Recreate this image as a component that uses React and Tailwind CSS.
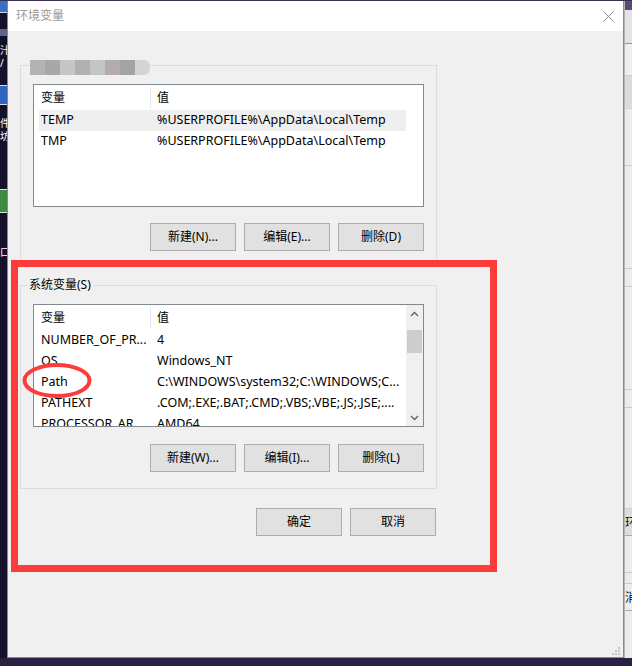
import React from "react";

const FONT = "font-['Noto_Sans','Noto_Sans_CJK_SC',sans-serif]";

function Btn({ children }) {
  return (
    <div className="w-[86px] h-[28px] bg-[#e1e1e1] border border-[#adadad] flex items-center justify-center text-[12px] text-black leading-none">
      {children}
    </div>
  );
}

function Chevron({ up }) {
  return (
    <svg width="9" height="6" viewBox="0 0 9 6">
      <polyline
        points={up ? "1,5 4.5,1.5 8,5" : "1,1 4.5,4.5 8,1"}
        fill="none"
        stroke="#606060"
        strokeWidth="1.3"
      />
    </svg>
  );
}

function Scrollbar() {
  return (
    <div className="w-[17px] h-full bg-[#f0f0f0] flex flex-col items-center">
      <div className="h-[17px] w-full flex items-center justify-center">
        <Chevron up />
      </div>
      <div className="flex-1 w-full px-px pt-[8px]">
        <div className="h-[23px] w-full bg-[#cdcdcd]" />
      </div>
      <div className="h-[17px] w-full flex items-center justify-center">
        <Chevron />
      </div>
    </div>
  );
}

function VarList({ rows, highlight, scroll }) {
  return (
    <div className="h-[123px] border border-[#828790] bg-white flex overflow-hidden">
      <div className="flex-1 min-w-0 overflow-hidden">
        <div className="h-[25px] flex items-stretch text-[12px]">
          <div className="w-[117px] pl-[7px] flex items-center border-r border-[#e5e5e5] my-[2px]">变量</div>
          <div className="pl-[6px] flex items-center">值</div>
        </div>
        {rows.map((r, i) => (
          <div key={i} className="h-[21px] flex items-center whitespace-nowrap text-[12.5px] text-black">
            <div className={"flex items-center h-full " + (highlight === i ? "bg-[#efefef] ml-[5px] w-[367px]" : "")}>
              <div className={highlight === i ? "w-[112px] pl-[2px]" : "w-[117px] pl-[7px]"}>{r[0]}</div>
              <div className="pl-[6px]">{r[1]}</div>
            </div>
          </div>
        ))}
      </div>
      {scroll && <Scrollbar />}
    </div>
  );
}

function Mosaic() {
  const colors = ["#b3b3b3", "#a8a8a8", "#c5c6c6", "#b2afad", "#c4c5c5", "#b3acaa", "#a3a3a4", "#d2d4d5"];
  return (
    <div className="flex h-[15px] -mb-[5px]">
      {colors.map((c, i) => (
        <div
          key={i}
          className={"w-[15px] h-[15px] " + (i === 7 ? "rounded-r-[6px]" : "")}
          style={{ backgroundColor: c }}
        />
      ))}
    </div>
  );
}

export default function App() {
  return (
    <div className={"relative w-[632px] h-[666px] overflow-hidden bg-[#1b1630] flex flex-col " + FONT}>
      <div className="h-px bg-[#3a2f52]" />
      <div className="flex h-[657px]">
        {/* left desktop strip */}
        <div className="w-[7px] h-full bg-[#16112b] flex flex-col overflow-hidden">
          <div className="h-[12px] bg-[#3b6fc4] border-b border-[#c9d6ea]" />
          <div className="h-[16px]" />
          <div className="h-[7px] bg-[#8aa0c8] opacity-60" />
          <div className="h-[8px]" />
          <div className="h-[13px] text-[10px] text-white leading-[13px] overflow-hidden">汁</div>
          <div className="h-[13px] text-[10px] text-white leading-[13px] overflow-hidden">/</div>
          <div className="h-[15px]" />
          <div className="h-[20px] bg-[#2f64c0] border-y border-[#d3deef]" />
          <div className="h-[12px]" />
          <div className="h-[13px] text-[10px] text-white leading-[13px] overflow-hidden">件</div>
          <div className="h-[13px] text-[10px] text-white leading-[13px] overflow-hidden">坊</div>
          <div className="h-[46px]" />
          <div className="h-[24px] bg-[#3f8a43] border-y border-[#d7e6d6]" />
          <div className="h-[32px]" />
          <div className="h-[14px] text-[10px] text-white leading-[14px] overflow-hidden">口</div>
        </div>

        {/* window */}
        <div className="w-[617px] h-full border-x border-b border-[#8a8a96] flex flex-col">
          <div className="h-[30px] bg-white flex items-center justify-between pl-[8px] pr-[9px]">
            <span className="text-[12px] text-[#9a9a9a]">环境变量</span>
            <svg width="11" height="11" viewBox="0 0 11 11">
              <path d="M0.5 0.5 L10.5 10.5 M10.5 0.5 L0.5 10.5" stroke="#8a8a8a" strokeWidth="1" />
            </svg>
          </div>
          <div className="flex-1 bg-[#f0f0f0] flex flex-col text-black">
            <fieldset className="mt-[29px] ml-[12px] w-[417px] border border-[#dcdcdc] px-[12px] pb-[15px]">
              <legend className="ml-[-3px] px-0">
                <Mosaic />
              </legend>
              <div className="mt-[14px]">
                <VarList
                  highlight={0}
                  rows={[
                    ["TEMP", "%USERPROFILE%\\AppData\\Local\\Temp"],
                    ["TMP", "%USERPROFILE%\\AppData\\Local\\Temp"],
                  ]}
                />
              </div>
              <div className="mt-[16px] flex justify-end gap-[8px]">
                <Btn>新建(N)...</Btn>
                <Btn>编辑(E)...</Btn>
                <Btn>删除(D)</Btn>
              </div>
            </fieldset>

            <fieldset className="mt-[10px] ml-[12px] w-[417px] border border-[#dcdcdc] px-[12px] pb-[16px]">
              <legend className="ml-[-6px] px-[2px] text-[12px] leading-[16px]">系统变量(S)</legend>
              <div className="mt-[11px]">
                <VarList
                  scroll
                  rows={[
                    ["NUMBER_OF_PR...", "4"],
                    ["OS", "Windows_NT"],
                    ["Path", "C:\\WINDOWS\\system32;C:\\WINDOWS;C..."],
                    ["PATHEXT", ".COM;.EXE;.BAT;.CMD;.VBS;.VBE;.JS;.JSE;...."],
                    ["PROCESSOR_AR...", "AMD64"],
                  ]}
                />
              </div>
              <div className="mt-[17px] flex justify-end gap-[8px]">
                <Btn>新建(W)...</Btn>
                <Btn>编辑(I)...</Btn>
                <Btn>删除(L)</Btn>
              </div>
            </fieldset>

            <div className="mt-[19px] ml-[12px] w-[417px] pr-px flex justify-end gap-[8px]">
              <Btn>确定</Btn>
              <Btn>取消</Btn>
            </div>

            <div className="flex-1 flex items-end justify-end pr-[2px] pb-[1px]">
              <svg width="9" height="9" viewBox="0 0 9 9">
                <rect x="6" y="0" width="2" height="2" fill="#c4c4c4" />
                <rect x="3" y="3" width="2" height="2" fill="#c4c4c4" />
                <rect x="6" y="3" width="2" height="2" fill="#c4c4c4" />
                <rect x="0" y="6" width="2" height="2" fill="#c4c4c4" />
                <rect x="3" y="6" width="2" height="2" fill="#c4c4c4" />
                <rect x="6" y="6" width="2" height="2" fill="#c4c4c4" />
              </svg>
            </div>
          </div>
        </div>

        {/* right strip: another window behind */}
        <div className="w-[8px] h-full flex flex-col bg-[#ececec] border-l border-[#b5b5b5] overflow-hidden">
          <div className="h-[9px] bg-[#5b4b72]" />
          <div className="h-[34px] bg-[#e4e4e4] border-b border-[#9a9a9a]" />
          <div className="h-[32px] bg-[#eeeeee] border-b border-[#d0d0d0]" />
          <div className="h-[33px] bg-[#dcdcdc] border-b border-[#d0d0d0]" />
          <div className="h-[57px] border-b border-[#cccccc]" />
          <div className="h-[103px] border-b border-[#cccccc]" />
          <div className="h-[18px] border-b border-[#cccccc]" />
          <div className="h-[103px] border-b border-[#cccccc]" />
          <div className="h-[18px] border-b border-[#cccccc]" />
          <div className="h-[101px] border-b border-[#cccccc]" />
          <div className="h-[27px] bg-[#dddddd] border-b border-[#aaaaaa] text-[12px] leading-[27px] overflow-hidden whitespace-nowrap">环</div>
          <div className="h-[37px] border-b border-[#cccccc]" />
          <div className="h-[11px] border-b border-[#cccccc]" />
          <div className="h-[27px] border-b border-[#aaaaaa] text-[12px] leading-[27px] overflow-hidden whitespace-nowrap">消</div>
          <div className="flex-1" />
        </div>
      </div>
      <div className="flex-1 bg-[#2a2040]" />

      {/* annotation overlays */}
      <div className="absolute left-[11px] top-[260px] w-[486px] h-[312px] border-[7px] border-[#fe3b3b] pointer-events-none" />
      <svg className="absolute left-[21px] top-[361px] pointer-events-none" width="74" height="40" viewBox="0 0 74 40">
        <ellipse cx="36" cy="19.5" rx="32.5" ry="15.5" fill="none" stroke="#fe3b3b" strokeWidth="4" />
      </svg>
    </div>
  );
}
